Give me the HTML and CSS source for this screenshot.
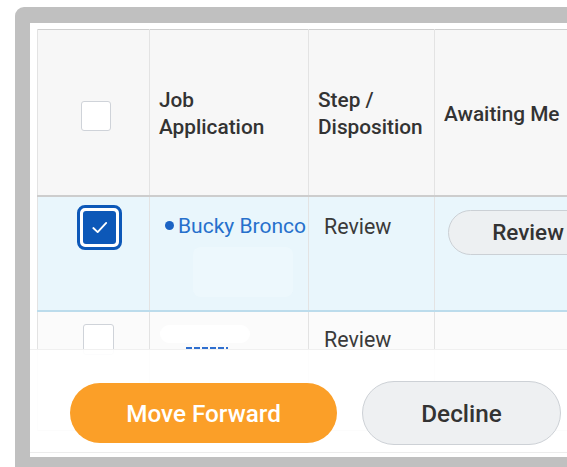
FILE: index.html
```html
<!DOCTYPE html>
<html lang="en">
<head>
<meta charset="utf-8">
<title>Candidates</title>
<link rel="stylesheet" href="styles.css">
</head>
<body>
<div class="frame">
  <div class="panel">
    <table class="grid">
      <colgroup>
        <col class="c-select">
        <col class="c-app">
        <col class="c-step">
        <col class="c-await">
      </colgroup>
      <thead>
        <tr>
          <th class="sel"><span class="box"></span></th>
          <th>Job<br>Application</th>
          <th>Step /<br>Disposition</th>
          <th class="nowrap">Awaiting Me</th>
        </tr>
      </thead>
      <tbody>
        <tr class="selected">
          <td class="sel">
            <span class="focus-ring">
              <span class="box checked">
                <svg viewBox="0 0 32 32" width="32" height="32" aria-hidden="true">
                  <path d="M10 16.5 L14.2 20.5 L22.5 11.5" fill="none" stroke="#fff" stroke-width="1.8" stroke-linecap="round" stroke-linejoin="round"/>
                </svg>
              </span>
            </span>
          </td>
          <td class="app">
            <a class="candidate" href="#"><span class="dot"></span>Bucky Bronco</a>
            <span class="hidden-detail"></span>
          </td>
          <td class="step">Review</td>
          <td class="await"><button class="pill" type="button">Review</button></td>
        </tr>
        <tr class="plain">
          <td class="sel"><span class="box small"></span></td>
          <td class="app">
            <span class="masked"></span>
            <span class="masked-link"></span>
          </td>
          <td class="step">Review</td>
          <td class="await"></td>
        </tr>
      </tbody>
    </table>

    <div class="actions">
      <button class="btn primary" type="button">Move Forward</button>
      <button class="btn secondary" type="button">Decline</button>
    </div>
  </div>
</div>
</body>
</html>
```

FILE: styles.css
```css
html, body {
  margin: 0;
  padding: 0;
  background: #fff;
  overflow: hidden;
  font-family: Roboto, "Liberation Sans", Arial, sans-serif;
}

.frame {
  margin: 7px 0 0 15px;
  width: 620px;
  padding: 16px 0 10px 15px;
  background: #c0c0c0;
  border-radius: 9px 0 0 0;
}

.panel {
  position: relative;
  height: 434px;
  background: #fff;
  padding: 6px 0 0 7px;
  box-sizing: border-box;
  overflow: hidden;
}

/* data grid */
.grid {
  border-collapse: collapse;
  table-layout: fixed;
  width: 620px;
  border: 1px solid #cfcfcf;
  color: #333;
}
.c-select { width: 112px; }
.c-app { width: 159px; }
.c-step { width: 126px; }
.c-await { width: 223px; }

.grid th,
.grid td {
  border-left: 1px solid #e3e3e3;
  padding: 0;
}

.grid thead tr {
  height: 166px;
  background: #f7f7f7;
  border-bottom: 2px solid #cdcdcd;
}
.grid th {
  text-align: left;
  vertical-align: middle;
  font-weight: 500;
  font-size: 20.8px;
  line-height: 27px;
  padding: 4px 4px 0 9px;
  color: #333;
  white-space: nowrap;
}

.grid th.sel {
  padding: 8px 0 0 43px;
}

.box {
  display: block;
  width: 30px;
  height: 30px;
  box-sizing: border-box;
  border: 1px solid #cfd3d9;
  border-radius: 3px;
  background: #fff;
}

/* selected row */
.grid tr.selected {
  height: 115px;
  background: #e9f6fc;
  border-bottom: 2px solid #bcdcec;
}
.grid td {
  vertical-align: top;
}
.selected td.sel {
  padding: 8px 0 0 39px;
}
.focus-ring {
  display: block;
  width: 45px;
  height: 45px;
  box-sizing: border-box;
  border: 3px solid #0d58b8;
  border-radius: 8px;
  padding: 3px;
  background: #fff;
}
.box.checked {
  width: 33px;
  height: 33px;
  border: none;
  border-radius: 3px;
  background: #0d58b8;
}
.box.checked svg { display: block; width: 33px; height: 33px; }

td.app {
  padding: 17px 0 0 15px;
  position: relative;
}
.candidate {
  display: flex;
  align-items: center;
  gap: 4px;
  color: #2670cc;
  font-size: 21px;
  line-height: 24px;
  text-decoration: none;
  white-space: nowrap;
}
.dot {
  flex: none;
  width: 9px;
  height: 9px;
  border-radius: 50%;
  background: #1b63c4;
}
.hidden-detail {
  display: block;
  width: 100px;
  height: 50px;
  margin: 9px 0 0 28px;
  background: rgba(240, 250, 254, 0.6);
  border-radius: 8px;
}

td.step {
  padding: 17px 0 0 15px;
  font-size: 21.4px;
  line-height: 26px;
  color: #3a3a3a;
}

td.await {
  padding: 13px 0 0 13px;
}
.pill {
  display: block;
  width: 160px;
  height: 45px;
  border: 1px solid #cbd0d5;
  border-radius: 23px;
  background: #edf0f2;
  color: #333;
  font-family: inherit;
  font-weight: 500;
  font-size: 22.5px;
  padding: 0;
}

/* third row */
.grid tr.plain {
  height: 120px;
  background: #fbfbfb;
}
.plain td.sel {
  padding: 12px 0 0 45px;
}
.box.small { width: 31px; height: 31px; }
.plain td.app { padding: 13px 0 0 10px; }
.masked {
  display: block;
  width: 90px;
  height: 18px;
  border-radius: 9px;
  background: #fff;
}
.masked-link {
  display: block;
  width: 42px;
  height: 3px;
  margin: 4px 0 0 26px;
  background: repeating-linear-gradient(90deg, #2f6fcf 0 6px, transparent 6px 8px);
}
.plain td.step { padding-top: 15px; }

/* sticky action bar */
.actions {
  position: absolute;
  left: 0;
  right: 0;
  top: 326px;
  height: 104px;
  padding: 24px 0 0 40px;
  background: rgba(255, 255, 255, 0.93);
  border-top: 1px solid #f0f0f0;
  border-bottom: 1px solid #ececec;
  display: flex;
  align-items: center;
  gap: 25px;
  box-sizing: border-box;
}
.btn {
  font-family: inherit;
  font-weight: 500;
  font-size: 24.3px;
  border-radius: 32px;
  padding: 0;
  cursor: pointer;
}
.btn.primary {
  width: 267px;
  height: 60px;
  border: none;
  background: #fb9f28;
  color: #fff;
}
.btn.secondary {
  width: 199px;
  height: 64px;
  border: 1px solid #cdd1d6;
  background: #eef0f2;
  color: #333;
}
```
